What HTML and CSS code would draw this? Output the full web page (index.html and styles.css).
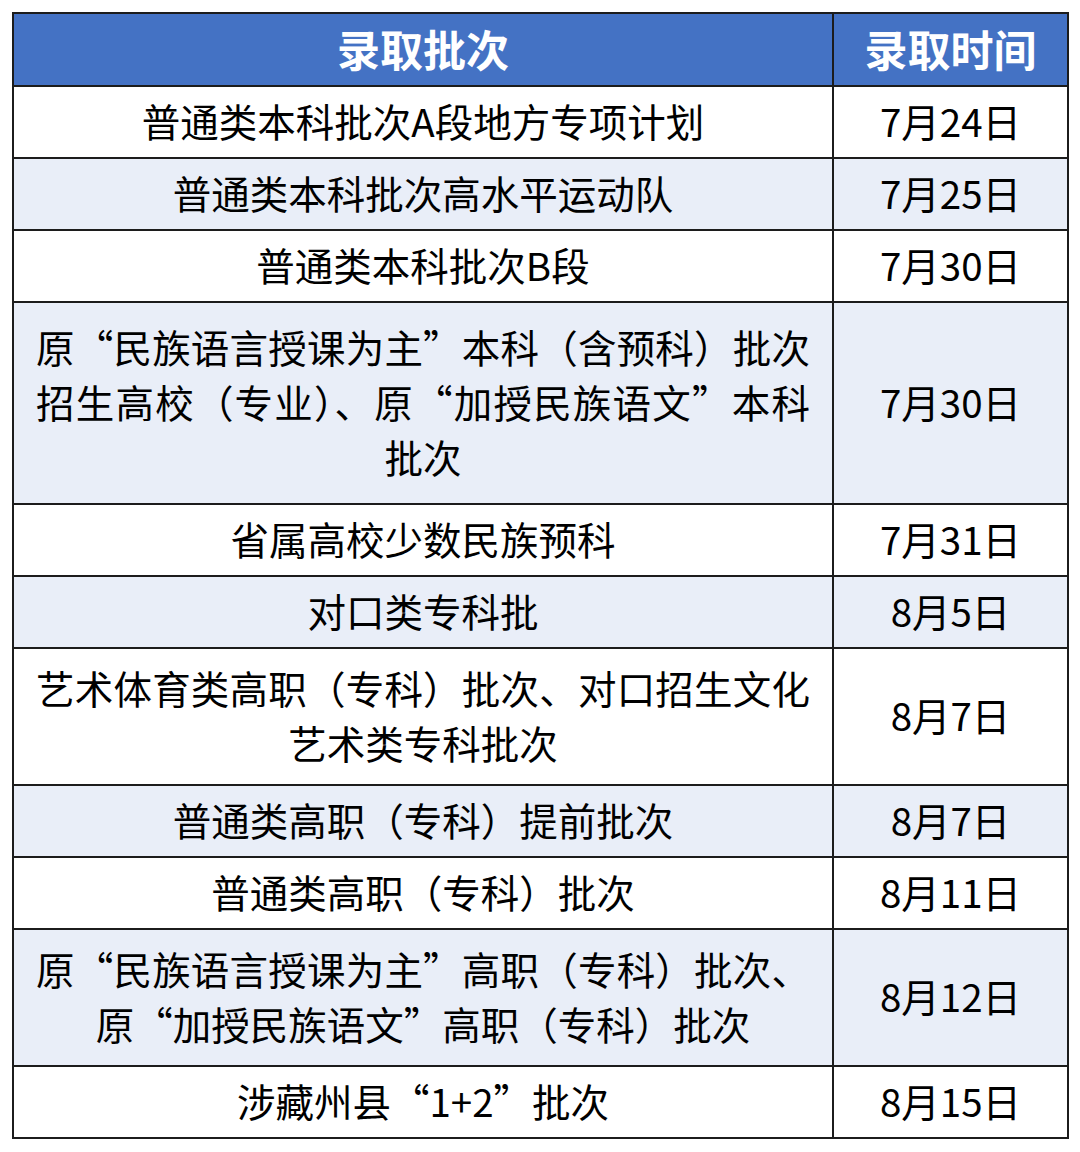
FILE: index.html
```html
<!DOCTYPE html>
<html lang="zh-CN">
<head>
<meta charset="utf-8">
<link rel="stylesheet" href="styles.css">
</head>
<body>
<table class="sched">
  <colgroup><col class="c1"><col class="c2"></colgroup>
  <thead>
    <tr class="h"><th>录取批次</th><th>录取时间</th></tr>
  </thead>
  <tbody>
    <tr class="r"><td>普通类本科批次A段地方专项计划</td><td>7月24日</td></tr>
    <tr class="r alt"><td>普通类本科批次高水平运动队</td><td>7月25日</td></tr>
    <tr class="r"><td>普通类本科批次B段</td><td>7月30日</td></tr>
    <tr class="r3 alt"><td class="multi"><span class="ln full">原“民族语言授课为主”本科（含预科）批次</span><span class="ln full">招生高校（专业）、原“加授民族语文”本科</span><span class="ln">批次</span></td><td>7月30日</td></tr>
    <tr class="r"><td>省属高校少数民族预科</td><td>7月31日</td></tr>
    <tr class="r alt"><td>对口类专科批</td><td>8月5日</td></tr>
    <tr class="r2"><td class="multi"><span class="ln full">艺术体育类高职（专科）批次、对口招生文化</span><span class="ln">艺术类专科批次</span></td><td>8月7日</td></tr>
    <tr class="r alt"><td>普通类高职（专科）提前批次</td><td>8月7日</td></tr>
    <tr class="r"><td>普通类高职（专科）批次</td><td>8月11日</td></tr>
    <tr class="r2 alt"><td class="multi"><span class="ln full">原“民族语言授课为主”高职（专科）批次、</span><span class="ln">原“加授民族语文”高职（专科）批次</span></td><td>8月12日</td></tr>
    <tr class="r"><td>涉藏州县“1+2”批次</td><td>8月15日</td></tr>
  </tbody>
</table>
</body>
</html>
```

FILE: styles.css
```css
html, body {
  margin: 0;
  padding: 0;
  background: #ffffff;
}
body {
  padding: 12px 12px 0 12px;
  font-family: "Noto Sans CJK SC", "Noto Sans", sans-serif;
  color: #000;
}
.sched {
  border-collapse: collapse;
  width: 1055px;
  table-layout: fixed;
}
.c1 { width: 820px; }
.c2 { width: 235px; }
.sched th, .sched td {
  border: 2px solid #1c1c1c;
  text-align: center;
  vertical-align: middle;
  padding: 0 22px;
  font-size: 38.5px;
  line-height: 55px;
  white-space: nowrap;
}
.sched td {
  font-weight: 400;
  padding-bottom: 4px;
}
.sched th {
  background: #4472c4;
  color: #ffffff;
  font-size: 43px;
  font-weight: 700;
  height: 69px;
  padding-top: 0;
  padding-bottom: 2px;
}
.r td { height: 66px; }
.r2 td { height: 131px; }
.r3 td { height: 196px; }
.alt td { background: #e9eef8; }
.multi .ln {
  display: block;
  text-align: center;
}
.multi .ln.full {
  text-align: justify;
  text-align-last: justify;
  text-justify: inter-character;
}
```
